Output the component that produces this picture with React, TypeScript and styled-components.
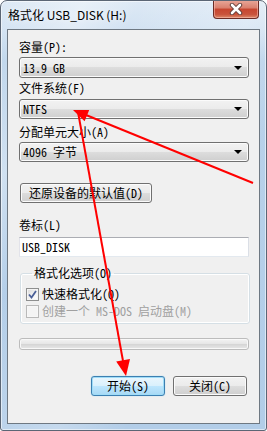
import React from "react";
import styled, { createGlobalStyle, css } from "styled-components";

const GlobalStyle = createGlobalStyle`
  html, body { margin: 0; padding: 0; background: #ffffff; }
  body {
    font-family: "Noto Sans Mono CJK SC", "Noto Sans CJK SC", sans-serif;
    font-size: 12px;
    color: #000;
  }
  * { box-sizing: border-box; }
`;

const Window = styled.div`
  position: relative;
  width: 267px;
  height: 431px;
  display: flex;
  flex-direction: column;
  border: 1px solid #5b6675;
  border-radius: 7px 7px 3px 3px;
  box-shadow: inset 0 0 0 1px rgba(255, 255, 255, 0.55);
  background:
    linear-gradient(115deg, rgba(255,255,255,0) 0%, rgba(255,255,255,0.35) 18%, rgba(255,255,255,0) 30%, rgba(255,255,255,0.25) 55%, rgba(255,255,255,0) 70%),
    linear-gradient(180deg, #dde9f5 0px, #d2e2f2 28px, #b9d2ea 60px, #b2cde8 100%);
  padding: 0 6px 6px 6px;
  overflow: hidden;
`;

const TitleBar = styled.div`
  height: 28px;
  display: flex;
  align-items: flex-start;
  padding-left: 1px;
`;

const Title = styled.div`
  margin-top: 6px;
  font-family: "Noto Sans CJK SC", sans-serif;
  font-size: 12px;
  line-height: 16px;
  color: #000;
  text-shadow: 0 0 6px rgba(255, 255, 255, 0.9);
`;

const CloseButton = styled.div`
  margin-left: auto;
  margin-right: 1px;
  margin-top: -1px;
  width: 46px;
  height: 19px;
  border: 1px solid #6b2c25;
  border-top: none;
  border-radius: 0 0 4px 4px;
  background: linear-gradient(180deg, #e9a99b 0%, #d97f6d 45%, #c7452f 50%, #c9543c 80%, #dc8a6a 100%);
  box-shadow: inset 0 0 0 1px rgba(255, 200, 190, 0.5);
  display: flex;
  align-items: center;
  justify-content: center;
`;

const Client = styled.div`
  flex: 1;
  border: 1px solid #6e7882;
  background: #f0f0f0;
  display: flex;
  flex-direction: column;
  padding: 10px 0 0 11px;
`;

const Label = styled.div`
  height: 14px;
  line-height: 14px;
  white-space: pre;
`;

const buttonFace = css`
  border: 1px solid #707070;
  border-radius: 3px;
  background: linear-gradient(180deg, #f2f2f2 0%, #ebebeb 50%, #dddddd 50%, #cfcfcf 100%);
  box-shadow: inset 0 0 0 1px #fbfbfb;
`;

const Select = styled.div<{ $mt: number; $h?: number }>`
  ${buttonFace};
  margin-top: ${(p) => p.$mt}px;
  width: 230px;
  height: ${(p) => p.$h ?? 20}px;
  display: flex;
  align-items: center;
  padding: 0 0 0 3px;
  white-space: pre;
  line-height: 14px;
`;

const SelectText = styled.span`
  flex: 1;
`;

const Caret = styled.span`
  width: 0;
  height: 0;
  margin-right: 6px;
  border-left: 4px solid transparent;
  border-right: 4px solid transparent;
  border-top: 4px solid #000;
`;

const Button = styled.div<{ $primary?: boolean; $w: number }>`
  ${buttonFace};
  width: ${(p) => p.$w}px;
  height: 20px;
  display: flex;
  align-items: center;
  justify-content: center;
  line-height: 14px;
  white-space: pre;
  ${(p) =>
    p.$primary &&
    css`
      border-color: #3c7fb1;
      background: linear-gradient(180deg, #eaf6fd 0%, #d9f0fc 50%, #bee6fd 50%, #a7d9f5 100%);
      box-shadow: inset 0 0 0 1px #9fdcf7, 0 0 1px #6cc7f0;
    `}
`;

const ResetButton = styled(Button)`
  margin-top: 21px;
  margin-left: 1px;
`;

const TextInput = styled.div`
  margin-top: 5px;
  width: 230px;
  height: 20px;
  background: #fff;
  border: 1px solid #abadb3;
  border-color: #abadb3 #dbdfe6 #e3e9ef #e2e3ea;
  display: flex;
  align-items: center;
  padding-left: 2px;
  line-height: 14px;
`;

const Group = styled.fieldset`
  margin: 9px 0 0 1px;
  width: 230px;
  border: 1px solid #d5dfe5;
  border-radius: 3px;
  box-shadow: inset 0 0 0 1px #ffffff;
  padding: 6px 0 4px 5px;
  display: flex;
  flex-direction: column;
  gap: 1px;
`;

const Legend = styled.legend`
  margin-left: 6px;
  padding: 0 2px;
  line-height: 14px;
  height: 14px;
`;

const CheckRow = styled.div<{ $disabled?: boolean }>`
  height: 16px;
  display: flex;
  align-items: center;
  gap: 3px;
  line-height: 14px;
  white-space: pre;
  color: ${(p) => (p.$disabled ? "#a0a0a0" : "#000")};
`;

const CheckBox = styled.span<{ $disabled?: boolean }>`
  width: 13px;
  height: 13px;
  border: 1px solid ${(p) => (p.$disabled ? "#b9b9b9" : "#8e8f8f")};
  background: ${(p) =>
    p.$disabled
      ? "#f4f4f4"
      : "linear-gradient(135deg, #d9d9d9 0%, #f4f4f4 60%, #ffffff 100%)"};
  box-shadow: inset 0 0 0 1px ${(p) => (p.$disabled ? "#f7f7f7" : "#f4f4f4")};
  display: flex;
  align-items: center;
  justify-content: center;
`;

const Progress = styled.div`
  margin-top: 14px;
  width: 230px;
  height: 12px;
  border: 1px solid #bcbcbc;
  border-radius: 3px;
  background: linear-gradient(180deg, #f3f3f3 0%, #e6e6e6 50%, #d6d6d6 55%, #e8e8e8 100%);
  box-shadow: inset 0 0 0 1px #f8f8f8;
`;

const ButtonRow = styled.div`
  margin-top: 26px;
  width: 228px;
  display: flex;
  justify-content: flex-end;
  gap: 8px;
`;

const Overlay = styled.svg`
  position: absolute;
  left: -1px;
  top: -1px;
  pointer-events: none;
`;

export default function App() {
  return (
    <>
      <GlobalStyle />
      <Window>
        <TitleBar>
          <Title>格式化 USB_DISK (H:)</Title>
          <CloseButton>
            <svg width="14" height="12" viewBox="0 0 14 12">
              <path d="M3 2 L11 10 M11 2 L3 10" stroke="#5a3a36" strokeWidth="4.4" strokeLinecap="round" />
              <path d="M3 2 L11 10 M11 2 L3 10" stroke="#ffffff" strokeWidth="2.6" strokeLinecap="round" />
            </svg>
          </CloseButton>
        </TitleBar>
        <Client>
          <Label>容量(P):</Label>
          <Select $mt={3} $h={21}>
            <SelectText>13.9 GB</SelectText>
            <Caret />
          </Select>
          <Label style={{ marginTop: 3 }}>文件系统(F)</Label>
          <Select $mt={4}>
            <SelectText>NTFS</SelectText>
            <Caret />
          </Select>
          <Label style={{ marginTop: 6 }}>分配单元大小(A)</Label>
          <Select $mt={3}>
            <SelectText>4096 字节</SelectText>
            <Caret />
          </Select>
          <ResetButton $w={132}>还原设备的默认值(D)</ResetButton>
          <Label style={{ marginTop: 15 }}>卷标(L)</Label>
          <TextInput>USB_DISK</TextInput>
          <Group>
            <Legend>格式化选项(O)</Legend>
            <CheckRow>
              <CheckBox>
                <svg width="9" height="9" viewBox="0 0 9 9">
                  <path d="M1 4.5 L3.5 7.5 L8 1" stroke="#4a5f97" strokeWidth="1.8" fill="none" />
                </svg>
              </CheckBox>
              快速格式化(Q)
            </CheckRow>
            <CheckRow $disabled>
              <CheckBox $disabled />
              创建一个 MS-DOS 启动盘(M)
            </CheckRow>
          </Group>
          <Progress />
          <ButtonRow>
            <Button $primary $w={74}>开始(S)</Button>
            <Button $w={74}>关闭(C)</Button>
          </ButtonRow>
        </Client>
        <Overlay width="267" height="431" viewBox="0 0 267 431">
          <g stroke="#ff0000" strokeWidth="2" fill="none">
            <line x1="253" y1="183" x2="86" y2="115" />
            <line x1="78" y1="112" x2="123" y2="361" />
          </g>
          <g fill="#ff0000">
            <polygon points="73,110 89.2,110.1 84.6,121.2" />
            <polygon points="126,376 116.2,361.6 130,359" />
          </g>
        </Overlay>
      </Window>
    </>
  );
}
